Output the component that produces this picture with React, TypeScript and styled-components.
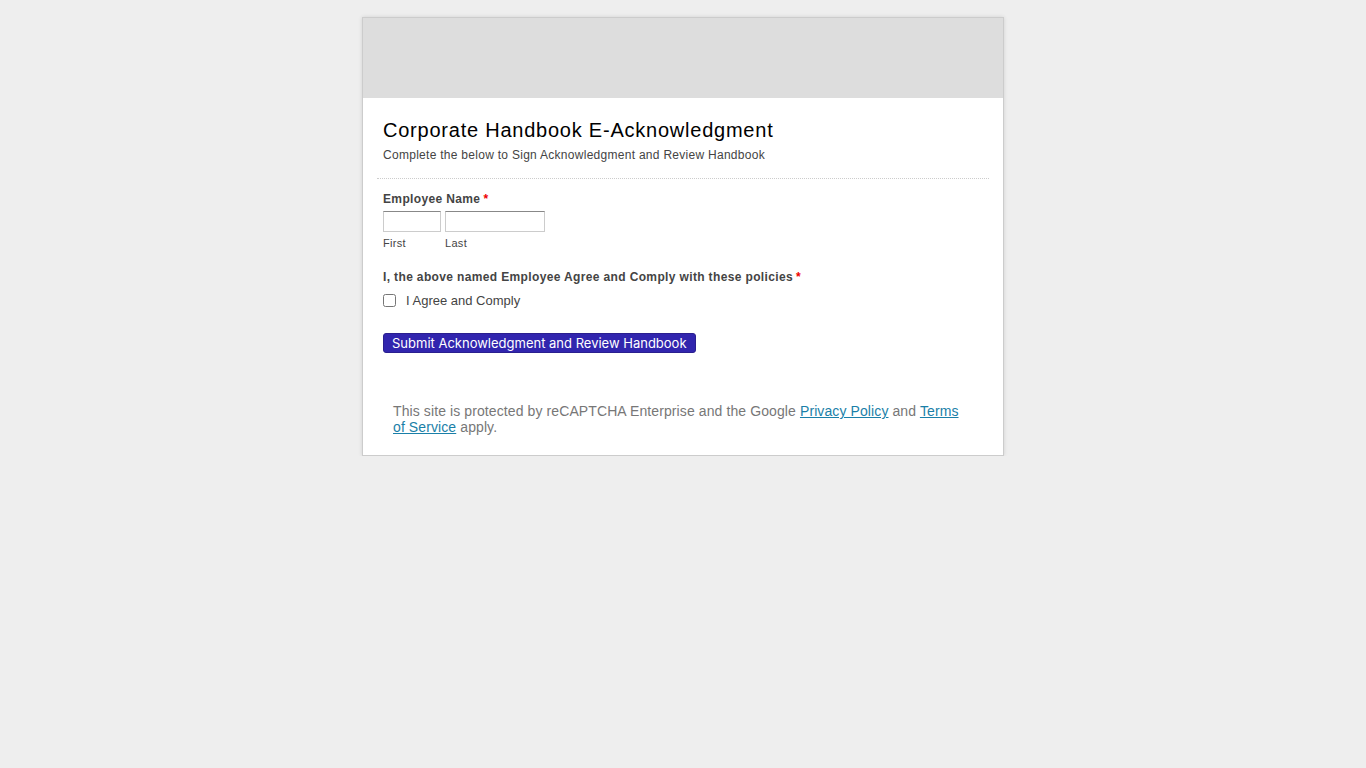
import React from "react";
import styled, { createGlobalStyle } from "styled-components";

const GlobalStyle = createGlobalStyle`
  html, body {
    margin: 0;
    padding: 0;
    background: #eeeeee;
    font-family: "Liberation Sans", Arial, sans-serif;
    color: #444;
  }
`;

const Card = styled.div`
  width: 640px;
  margin: 17px auto 0;
  background: #fff;
  border: 1px solid #cccccc;
  box-shadow: 0 0 4px rgba(0, 0, 0, 0.12);
`;

const Banner = styled.div`
  height: 80px;
  background: #dddddd;
`;

const Section = styled.div`
  padding: 18px 14px 0;
`;

const Heading = styled.div`
  padding: 0 6px 15px;
  border-bottom: 1px dotted #cccccc;
`;

const Title = styled.h1`
  margin: 0;
  font-size: 20px;
  line-height: 28px;
  font-weight: normal;
  color: #000;
  letter-spacing: 0.77px;
`;

const Subtitle = styled.div`
  margin-top: 3px;
  font-size: 12px;
  line-height: 16px;
  color: #444;
  letter-spacing: 0.28px;
`;

const Field = styled.div<{ $top: number }>`
  padding: 0 6px;
  margin-top: ${(p) => p.$top}px;
`;

const Label = styled.div`
  font-size: 12px;
  font-weight: bold;
  line-height: 16px;
  color: #444;
  letter-spacing: 0.36px;
  margin-bottom: 4px;
`;

const Req = styled.span`
  color: #e00;
  margin-left: 3px;
`;

const NameRow = styled.div`
  display: flex;
  gap: 4px;
`;

const NamePart = styled.div`
  display: flex;
  flex-direction: column;
`;

const TextInput = styled.input<{ $w: number }>`
  box-sizing: border-box;
  width: ${(p) => p.$w}px;
  height: 21px;
  margin: 0;
  border: 1px solid #cccccc;
  border-top-color: #888;
  padding: 0 3px;
  font: inherit;
`;

const SubLabel = styled.label`
  font-size: 11px;
  line-height: 14px;
  margin-top: 4px;
  color: #444;
  letter-spacing: 0.3px;
`;

const CheckRow = styled.label`
  display: flex;
  align-items: center;
  gap: 10px;
  font-size: 13px;
  color: #444;
  margin-top: 8px;

  input {
    margin: 0;
    width: 13px;
    height: 13px;
  }
`;

const SubmitButton = styled.button`
  display: block;
  height: 20px;
  padding: 0 8px;
  background: #3125ae;
  color: #fff;
  border: 1px solid #2a1f8f;
  border-radius: 3px;
  font-family: Inter, "Liberation Sans", sans-serif;
  font-size: 13px;
  line-height: 18px;
`;

const Recaptcha = styled.div`
  padding: 50px 30px 20px;
  font-size: 14px;
  line-height: 16px;
  color: #777;
  letter-spacing: 0.1px;

  a {
    color: #1a7fa8;
    text-decoration: underline;
  }
`;

export default function App() {
  return (
    <>
      <GlobalStyle />
      <Card>
        <Banner />
        <Section>
          <Heading>
            <Title>Corporate Handbook E-Acknowledgment</Title>
            <Subtitle>Complete the below to Sign Acknowledgment and Review Handbook</Subtitle>
          </Heading>
          <Field $top={12}>
            <Label>
              Employee Name<Req>*</Req>
            </Label>
            <NameRow>
              <NamePart>
                <TextInput $w={58} type="text" />
                <SubLabel>First</SubLabel>
              </NamePart>
              <NamePart>
                <TextInput $w={100} type="text" />
                <SubLabel>Last</SubLabel>
              </NamePart>
            </NameRow>
          </Field>
          <Field $top={19}>
            <Label>
              I, the above named Employee Agree and Comply with these policies<Req>*</Req>
            </Label>
            <CheckRow>
              <input type="checkbox" />
              I Agree and Comply
            </CheckRow>
          </Field>
          <Field $top={25}>
            <SubmitButton type="button">Submit Acknowledgment and Review Handbook</SubmitButton>
          </Field>
        </Section>
        <Recaptcha>
          This site is protected by reCAPTCHA Enterprise and the Google <a href="#">Privacy Policy</a> and{" "}
          <a href="#">Terms of Service</a> apply.
        </Recaptcha>
      </Card>
    </>
  );
}
